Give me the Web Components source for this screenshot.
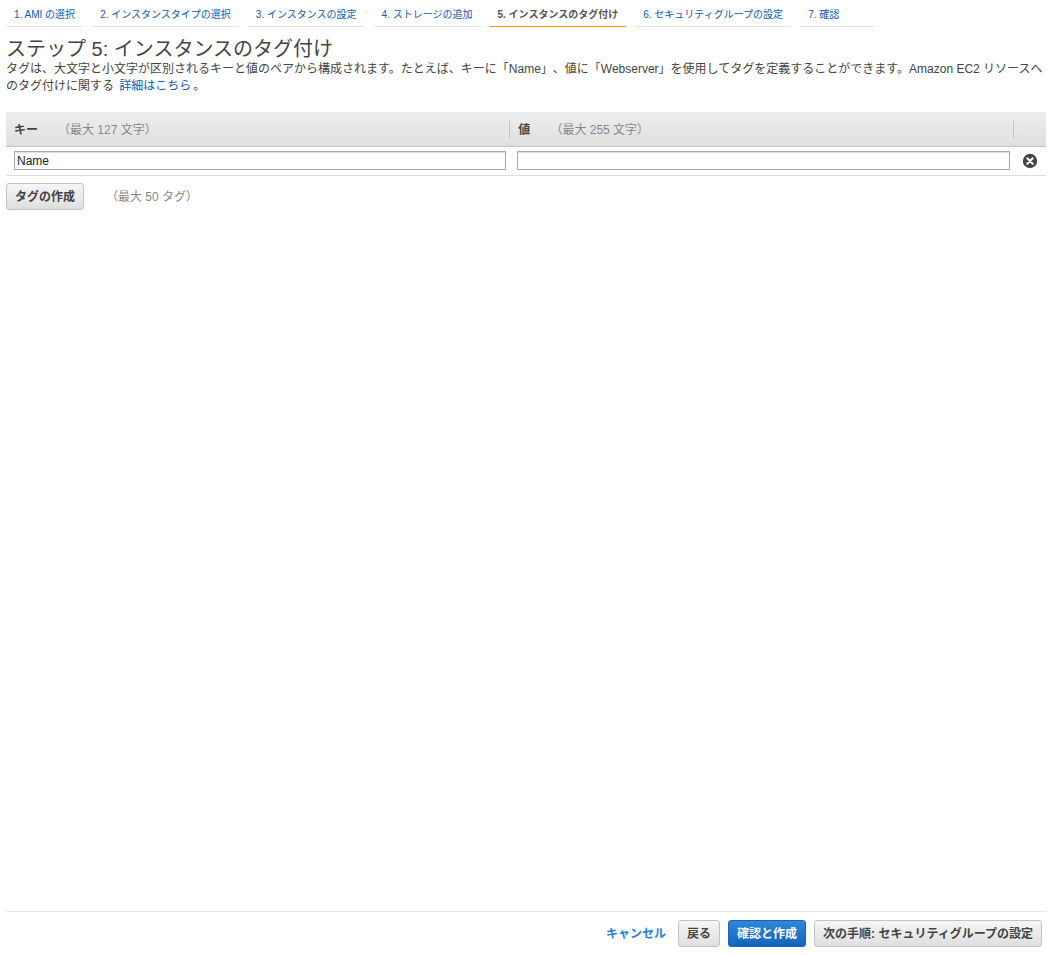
<!DOCTYPE html>
<html lang="ja">
<head>
<meta charset="utf-8">
<meta name="viewport" content="width=device-width, initial-scale=1">
<title>ステップ 5: インスタンスのタグ付け</title>
<style>
  body {
    margin: 0;
    background: #fff;
    color: #444;
    font: 12px/17px "Liberation Sans", "Noto Sans CJK JP", sans-serif;
    text-spacing-trim: space-all;
  }
</style>
</head>
<body>
<launch-wizard>
  <wizard-steps slot="steps">
    <wizard-step>1. AMI の選択</wizard-step>
    <wizard-step>2. インスタンスタイプの選択</wizard-step>
    <wizard-step>3. インスタンスの設定</wizard-step>
    <wizard-step>4. ストレージの追加</wizard-step>
    <wizard-step current>5. インスタンスのタグ付け</wizard-step>
    <wizard-step>6. セキュリティグループの設定</wizard-step>
    <wizard-step>7. 確認</wizard-step>
  </wizard-steps>
  <step-intro>
    <span slot="title">ステップ 5: インスタンスのタグ付け</span>
    タグは、大文字と小文字が区別されるキーと値のペアから構成されます。たとえば、キーに「Name」、値に「Webserver」を使用してタグを定義することができます。Amazon EC2 リソースへのタグ付けに関する <text-link>詳細はこちら</text-link>。
  </step-intro>
  <tag-editor></tag-editor>
  <text-link slot="actions" strong>キャンセル</text-link>
  <push-button slot="actions">戻る</push-button>
  <push-button slot="actions" primary>確認と作成</push-button>
  <push-button slot="actions">次の手順: セキュリティグループの設定</push-button>
</launch-wizard>

<script>
const define = (name, html) => {
  const template = document.createElement('template');
  template.innerHTML = html;
  customElements.define(name, class extends HTMLElement {
    constructor() {
      super();
      this.attachShadow({ mode: 'open' }).append(template.content.cloneNode(true));
    }
  });
};

define('text-link', `
  <style>
    :host { display: inline; }
    a { margin: 0 2px; color: #0f59ae; text-decoration: none; }
    :host([strong]) a { color: #2a7fd6; font-weight: bold; }
    a:hover { text-decoration: underline; }
  </style>
  <a href="#"><slot></slot></a>`);

define('push-button', `
  <style>
    :host { display: inline-block; }
    button {
      display: block;
      box-sizing: border-box;
      height: 27px;
      padding: 2px 8px 0;
      border: 1px solid #c2c2c2;
      border-radius: 3px;
      background: linear-gradient(#f6f6f6, #dfdfdf);
      color: #444;
      font: bold 12px/17px "Liberation Sans", "Noto Sans CJK JP", sans-serif;
      white-space: nowrap;
      cursor: pointer;
    }
    :host([primary]) button {
      border-color: #1a62b3;
      background: linear-gradient(#2f87dc, #1264bb);
      color: #fff;
    }
  </style>
  <button type="button"><slot></slot></button>`);

define('wizard-step', `
  <style>
    :host {
      display: block;
      padding: 6px 8px 3px;
      border-bottom: 1px solid #e6e6e6;
      font-size: 10px;
      white-space: nowrap;
    }
    :host(:last-child) { min-width: 59px; }
    a { color: #0f59ae; text-decoration: none; }
    :host([current]) { border-color: #f90; font-weight: bold; }
    :host([current]) a { color: #555; }
  </style>
  <a href="#"><slot></slot></a>`);

define('wizard-steps', `
  <style>
    :host { display: block; }
    nav { display: flex; gap: 9px; }
  </style>
  <nav aria-label="手順"><slot></slot></nav>`);

define('step-intro', `
  <style>
    :host { display: block; padding-top: 10px; }
    h1 { margin: 0; font-size: 20px; line-height: 24px; font-weight: normal; }
    p { margin: 0; }
  </style>
  <h1><slot name="title"></slot></h1>
  <p><slot></slot></p>`);

define('tag-editor', `
  <style>
    :host { display: block; padding-top: 17px; }
    table { width: 100%; border-collapse: separate; border-spacing: 0; table-layout: fixed; }
    .key { width: 48.4%; }
    .end { width: 33px; }
    th {
      box-sizing: border-box;
      height: 35px;
      padding: 0;
      border-bottom: 1px solid #c3c3c3;
      background: linear-gradient(#eee, #dfdfdf);
      text-align: left;
    }
    th div {
      display: flex;
      gap: 20px;
      box-sizing: border-box;
      height: 17px;
      padding: 1px 0 0 8px;
      border-left: 1px solid #c3c3c3;
    }
    th:first-child div { border-left: 0; }
    .hint { color: #888; font-weight: normal; }
    td { padding: 4px 3px 5px 8px; border-bottom: 1px solid #ddd; }
    td:last-child { padding: 0; }
    input {
      display: block;
      box-sizing: border-box;
      width: 100%;
      height: 19px;
      padding: 0 2px;
      border: 1px solid #aaa;
      border-radius: 0;
      box-shadow: inset 0 1px 1px #ddd;
      background: #fff;
      color: #222;
      font: inherit;
      outline: 0;
    }
    .remove { display: block; margin: 0 auto; padding: 0; border: 0; background: none; cursor: pointer; }
    svg { display: block; }
    footer { display: flex; align-items: center; gap: 22px; padding-top: 7px; }
    footer .hint { padding-top: 2px; }
  </style>
  <table>
    <colgroup><col class="key"><col><col class="end"></colgroup>
    <thead>
      <tr>
        <th scope="col"><div><label for="key">キー</label><span class="hint">（最大 127 文字）</span></div></th>
        <th scope="col"><div><label for="value">値</label><span class="hint">（最大 255 文字）</span></div></th>
        <th><div></div></th>
      </tr>
    </thead>
    <tbody>
      <tr>
        <td><input id="key" type="text" value="Name"></td>
        <td><input id="value" type="text"></td>
        <td>
          <button class="remove" type="button" aria-label="削除">
            <svg width="16" height="16" viewBox="0 0 16 16" aria-hidden="true">
              <circle cx="8" cy="8" r="7.2" fill="#444"/>
              <path d="M5.3 5.3l5.4 5.4M10.7 5.3l-5.4 5.4" stroke="#fff" stroke-width="2" stroke-linecap="round"/>
            </svg>
          </button>
        </td>
      </tr>
    </tbody>
  </table>
  <footer>
    <push-button>タグの作成</push-button>
    <span class="hint">（最大 50 タグ）</span>
  </footer>`);

define('launch-wizard', `
  <style>
    :host { display: flex; flex-direction: column; box-sizing: border-box; min-height: 100vh; padding: 0 6px; }
    main { flex: 1; }
    .actions {
      display: flex;
      justify-content: flex-end;
      align-items: center;
      gap: 8px;
      padding: 8px 4px;
      border-top: 1px solid #e6e6e6;
    }
    ::slotted(text-link) { padding: 2px 2px 0 0; }
  </style>
  <slot name="steps"></slot>
  <main><slot></slot></main>
  <div class="actions"><slot name="actions"></slot></div>`);
</script>
</body>
</html>
